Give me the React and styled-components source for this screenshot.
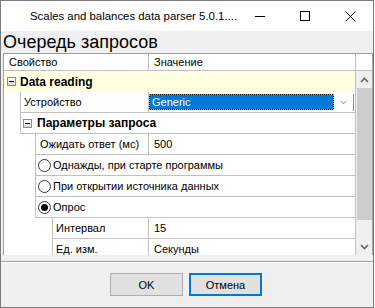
import React from 'react';
import styled, { createGlobalStyle } from 'styled-components';

const Global = createGlobalStyle`
  html, body { margin: 0; padding: 0; background: #ffffff; }
  body { font-family: "Liberation Sans", Arial, sans-serif; }
  #root { width: 375px; height: 308px; }
`;

const Window = styled.div`
  width: 374px;
  height: 308px;
  box-sizing: border-box;
  border: 1px solid #7a7a7a;
  background: #f0f0f0;
  display: flex;
  flex-direction: column;
  overflow: hidden;
`;

const TitleBar = styled.div`
  height: 30px;
  flex: 0 0 30px;
  background: #ffffff;
  display: flex;
  align-items: center;
`;

const TitleText = styled.div`
  flex: 1;
  padding-left: 29px;
  font-size: 11.4px;
  color: #000;
  white-space: nowrap;
`;

const TitleButton = styled.div`
  width: 46px;
  height: 30px;
  display: flex;
  align-items: center;
  justify-content: center;
  color: #000;
`;

const Heading = styled.div`
  height: 22px;
  flex: 0 0 22px;
  line-height: 23px;
  padding-left: 2px;
  font-size: 18px;
  color: #000;
`;

const Grid = styled.div`
  margin-left: 2px;
  width: 370px;
  height: 202px;
  box-sizing: border-box;
  border: 1px solid #a0a0a0;
  border-bottom: none;
  background: #ffffff;
  display: flex;
  flex-direction: column;
  font-size: 11px;
  color: #000;
`;

const HeaderRow = styled.div`
  height: 17px;
  flex: 0 0 17px;
  box-sizing: border-box;
  border-bottom: 1px solid #c0c0c0;
  display: flex;
`;

const HeaderCell = styled.div`
  box-sizing: border-box;
  width: ${p => p.$w}px;
  flex: 0 0 ${p => p.$w}px;
  border-right: ${p => (p.$line ? '1px solid #c0c0c0' : 'none')};
  padding-left: ${p => p.$pad || 0}px;
  line-height: 16px;
  white-space: nowrap;
  overflow: hidden;
`;

const Body = styled.div`
  flex: 1;
  display: flex;
  min-height: 0;
`;

const Rows = styled.div`
  width: 352px;
  flex: 0 0 352px;
  box-sizing: border-box;
  border-right: 1px solid #c0c0c0;
  overflow: hidden;
  display: flex;
  flex-direction: column;
`;

const CategoryRow = styled.div`
  height: 21px;
  flex: 0 0 21px;
  background: #ffffe1;
  display: flex;
  align-items: center;
  padding-left: 3px;
  font-weight: bold;
  font-size: 12px;
`;

const Row = styled.div`
  height: 21px;
  flex: 0 0 21px;
  box-sizing: border-box;
  margin-left: ${p => p.$indent}px;
  border-left: 1px solid #c0c0c0;
  border-bottom: 1px solid #c0c0c0;
  display: flex;
  align-items: center;
  white-space: nowrap;
`;

const GroupRow = styled(Row)`
  font-weight: bold;
  font-size: 12px;
  padding-left: 2px;
`;

const NameCell = styled.div`
  box-sizing: border-box;
  width: ${p => p.$w}px;
  flex: 0 0 ${p => p.$w}px;
  height: 100%;
  border-right: 1px solid #c0c0c0;
  padding-left: ${p => p.$pad}px;
  display: flex;
  align-items: center;
`;

const ValueCell = styled.div`
  flex: 1;
  height: 100%;
  padding-left: 5px;
  display: flex;
  align-items: center;
`;

const ComboCell = styled.div`
  flex: 1;
  height: 100%;
  display: flex;
  align-items: center;
`;

const Combo = styled.div`
  width: 205px;
  height: 17px;
  box-sizing: border-box;
  border-right: 1px solid #8c8c8c;
  display: flex;
  align-items: center;
`;

const ComboText = styled.div`
  width: 185px;
  height: 16px;
  box-sizing: border-box;
  border: 1px dotted #ff9a1a;
  background: linear-gradient(#0078d7, #0078d7) padding-box, #000 border-box;
  color: #fff;
  padding-left: 2px;
  line-height: 14px;
`;

const ComboArrow = styled.div`
  flex: 1;
  display: flex;
  align-items: center;
  justify-content: center;
`;

const Minus = styled.div`
  width: 9px;
  height: 9px;
  box-sizing: border-box;
  border: 1px solid #8e8f8f;
  background: linear-gradient(#ffffff, #d6d6d6);
  margin-right: ${p => p.$gap}px;
  position: relative;
  flex: 0 0 9px;
  &::after {
    content: '';
    position: absolute;
    left: 1px;
    top: 3px;
    width: 5px;
    height: 1px;
    background: #000;
  }
`;

const RadioRow = styled(Row)`
  padding-left: 2px;
`;

const Radio = styled.div`
  width: 13px;
  height: 13px;
  box-sizing: border-box;
  border-radius: 50%;
  border: 1px solid #333;
  background: #fff;
  margin-right: 2px;
  display: flex;
  align-items: center;
  justify-content: center;
  &::after {
    content: '';
    display: ${p => (p.$checked ? 'block' : 'none')};
    width: 7px;
    height: 7px;
    border-radius: 50%;
    background: #000;
  }
`;

const Scrollbar = styled.div`
  width: 16px;
  flex: 0 0 16px;
  display: flex;
  flex-direction: column;
  background: #f0f0f0;
`;

const ScrollButton = styled.div`
  height: 17px;
  flex: 0 0 17px;
  display: flex;
  align-items: center;
  justify-content: center;
`;

const Thumb = styled.div`
  height: 132px;
  flex: 0 0 132px;
  margin-left: 1px;
  background: #cdcdcd;
`;

const Track = styled.div`
  flex: 1;
`;

const Separator = styled.div`
  margin-top: 6px;
  height: 1px;
  background: #a0a0a0;
  border-bottom: 1px solid #ffffff;
`;

const Footer = styled.div`
  margin-top: 10px;
  display: flex;
  justify-content: center;
  gap: 6px;
  padding-right: 2px;
`;

const Button = styled.div`
  width: 73px;
  height: 23px;
  box-sizing: border-box;
  background: #e1e1e1;
  border: ${p => (p.$default ? '2px solid #0078d7' : '1px solid #adadad')};
  font-size: 11px;
  display: flex;
  align-items: center;
  justify-content: center;
  color: #000;
`;

const Chevron = ({ up, color = '#606060', w = 9, h = 6, sw = 1.6 }) => (
  <svg width={w} height={h} viewBox="0 0 9 6">
    <polyline
      points={up ? '1,5 4.5,1.5 8,5' : '1,1 4.5,4.5 8,1'}
      fill="none"
      stroke={color}
      strokeWidth={sw}
    />
  </svg>
);

export default function App() {
  return (
    <>
      <Global />
      <Window>
        <TitleBar>
          <TitleText>Scales and balances data parser 5.0.1....</TitleText>
          <TitleButton>
            <svg width="10" height="10" viewBox="0 0 10 10">
              <line x1="0" y1="5.5" x2="10" y2="5.5" stroke="#000" strokeWidth="1" />
            </svg>
          </TitleButton>
          <TitleButton>
            <svg width="10" height="10" viewBox="0 0 10 10">
              <rect x="0.5" y="0.5" width="9" height="9" fill="none" stroke="#000" strokeWidth="1" />
            </svg>
          </TitleButton>
          <TitleButton>
            <svg width="11" height="11" viewBox="0 0 11 11">
              <path d="M0.5 0.5 L10.5 10.5 M10.5 0.5 L0.5 10.5" stroke="#000" strokeWidth="1" />
            </svg>
          </TitleButton>
        </TitleBar>
        <Heading>Очередь запросов</Heading>
        <Grid>
          <HeaderRow>
            <HeaderCell $w={145} $line $pad={5}>Свойство</HeaderCell>
            <HeaderCell $w={207} $line $pad={5}>Значение</HeaderCell>
            <HeaderCell $w={16} />
          </HeaderRow>
          <Body>
            <Rows>
              <CategoryRow>
                <Minus $gap={4} />
                Data reading
              </CategoryRow>
              <Row $indent={16}>
                <NameCell $w={128} $pad={3}>Устройство</NameCell>
                <ComboCell>
                  <Combo>
                    <ComboText>Generic</ComboText>
                    <ComboArrow>
                      <Chevron color="#6a6a6a" w={9} h={5} sw={1} />
                    </ComboArrow>
                  </Combo>
                </ComboCell>
              </Row>
              <GroupRow $indent={16}>
                <Minus $gap={5} />
                Параметры запроса
              </GroupRow>
              <Row $indent={31}>
                <NameCell $w={113} $pad={4}>Ожидать ответ (мс)</NameCell>
                <ValueCell>500</ValueCell>
              </Row>
              <RadioRow $indent={31}>
                <Radio />
                Однажды, при старте программы
              </RadioRow>
              <RadioRow $indent={31}>
                <Radio />
                При открытии источника данных
              </RadioRow>
              <RadioRow $indent={31}>
                <Radio $checked />
                Опрос
              </RadioRow>
              <Row $indent={48}>
                <NameCell $w={96} $pad={3}>Интервал</NameCell>
                <ValueCell>15</ValueCell>
              </Row>
              <Row $indent={48}>
                <NameCell $w={96} $pad={3}>Ед. изм.</NameCell>
                <ValueCell>Секунды</ValueCell>
              </Row>
            </Rows>
            <Scrollbar>
              <ScrollButton>
                <Chevron up />
              </ScrollButton>
              <Thumb />
              <Track />
              <ScrollButton>
                <Chevron />
              </ScrollButton>
            </Scrollbar>
          </Body>
        </Grid>
        <Separator />
        <Footer>
          <Button>OK</Button>
          <Button $default>Отмена</Button>
        </Footer>
      </Window>
    </>
  );
}
